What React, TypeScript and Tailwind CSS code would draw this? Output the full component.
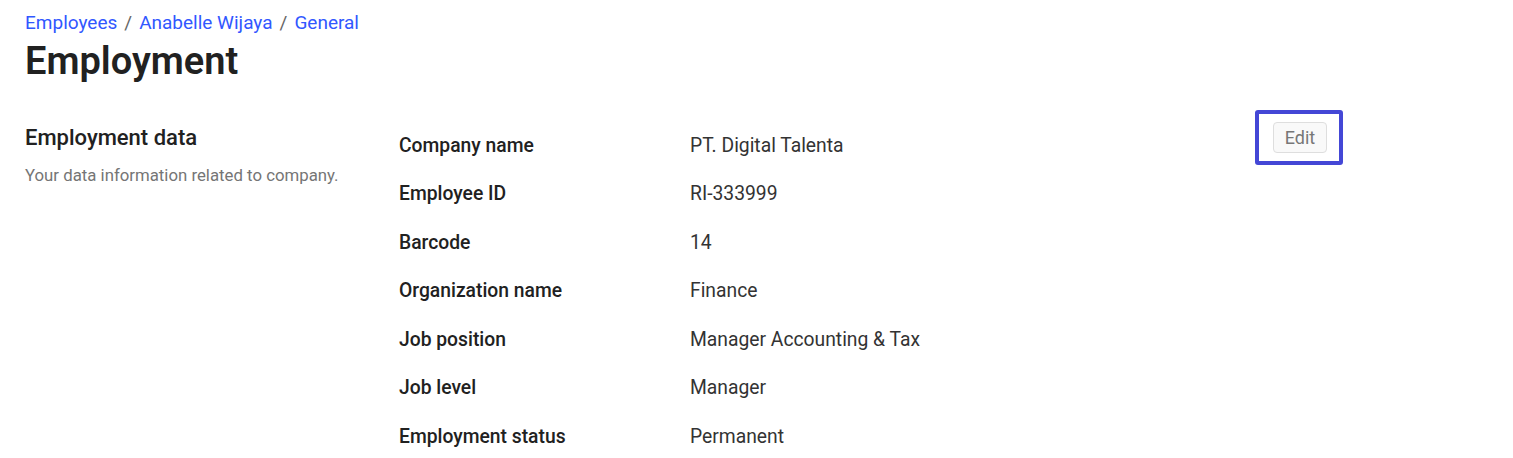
const rows = [
  { label: "Company name", value: "PT. Digital Talenta" },
  { label: "Employee ID", value: "RI-333999" },
  { label: "Barcode", value: "14" },
  { label: "Organization name", value: "Finance" },
  { label: "Job position", value: "Manager Accounting & Tax" },
  { label: "Job level", value: "Manager" },
  { label: "Employment status", value: "Permanent" },
];

const crumbs = ["Employees", "Anabelle Wijaya", "General"];

export default function App() {
  return (
    <div className="min-h-[458px] w-full overflow-hidden bg-white pl-[25px] font-['Roboto',sans-serif] text-[#212121]">
      {/* Breadcrumb */}
      <nav className="flex items-center pt-[12px] text-[19px] leading-[22px]">
        {crumbs.map((c, i) => (
          <span key={c} className="flex items-center">
            {i > 0 && <span className="mx-[7px] text-[#666]">/</span>}
            <a href="#" className="text-[#3157ff]">
              {c}
            </a>
          </span>
        ))}
      </nav>

      <h1 className="mt-[5px] text-[38px] font-semibold leading-[44px] text-[#212121]">Employment</h1>

      {/* Employment data section */}
      <section className="mt-[27px] flex items-start">
        <div className="w-[374px] shrink-0 pt-[14px]">
          <h2 className="text-[22px] font-medium leading-[28px] text-[#212121]">Employment data</h2>
          <p className="mt-[13px] text-[16.8px] leading-[20px] text-[#757575]">
            Your data information related to company.
          </p>
        </div>

        <div className="w-[856px] shrink-0 pt-[11px]">
          {rows.map((r) => (
            <div key={r.label} className="flex h-[48.5px] items-center text-[19.3px] leading-[27px]">
              <div className="w-[291px] shrink-0 font-medium text-[#212121]">{r.label}</div>
              <div className="text-[#333]">{r.value}</div>
            </div>
          ))}
        </div>

        <div className="shrink-0 rounded-[3px] border-4 border-[#4447d6] pb-[8px] pl-[14px] pr-[12px] pt-[8px]">
          <button className="h-[31px] w-[54px] rounded-[4px] border border-[#dedede] bg-[#f9f9f9] text-[18px] leading-none text-[#777]">
            Edit
          </button>
        </div>
      </section>
    </div>
  );
}
